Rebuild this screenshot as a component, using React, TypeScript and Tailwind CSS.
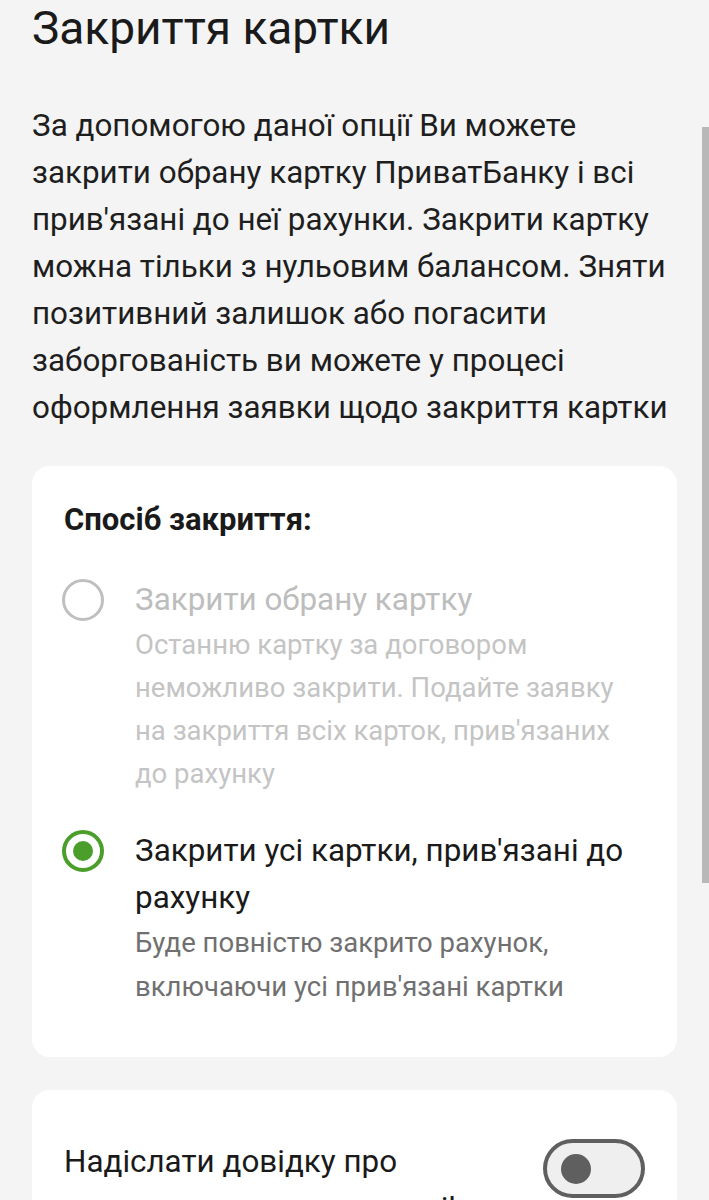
import React from "react";

type Option = {
  title: string;
  note: string;
  disabled?: boolean;
  checked?: boolean;
};

const options: Option[] = [
  {
    title: "Закрити обрану картку",
    note: "Останню картку за договором неможливо закрити. Подайте заявку на закриття всіх карток, прив'язаних до рахунку",
    disabled: true,
  },
  {
    title: "Закрити усі картки, прив'язані до рахунку",
    note: "Буде повністю закрито рахунок, включаючи усі прив'язані картки",
    checked: true,
  },
];

const Radio = ({ checked, disabled }: { checked?: boolean; disabled?: boolean }) => {
  if (checked)
    return (
      <div className="mt-[3px] flex h-[42px] w-[42px] shrink-0 items-center justify-center rounded-full border-[4px] border-[#4c9e2b]">
        <div className="h-[20px] w-[20px] rounded-full bg-[#4c9e2b]"></div>
      </div>
    );
  return (
    <div
      className={`mt-[3px] h-[42px] w-[42px] shrink-0 rounded-full border-[3px] ${
        disabled ? "border-[#bfbfbf]" : "border-[#5f5f5f]"
      }`}
    ></div>
  );
};

export default function App() {
  return (
    <div className="relative min-h-[1200px] overflow-hidden bg-[#f4f4f4] font-['Roboto',sans-serif] text-[#1a1a1a]">
      <div className="px-8 pt-[4px]">
        <h1 className="text-[46px] leading-[48px] font-normal">Закриття картки</h1>
        <p className="mt-[50px] text-[31.4px] leading-[47px] text-[#1e1e1e]">
          За допомогою даної опції Ви можете закрити обрану картку ПриватБанку і всі прив'язані до неї
          рахунки. Закрити картку можна тільки з нульовим балансом. Зняти позитивний залишок або
          погасити заборгованість ви можете у процесі оформлення заявки щодо закриття картки
        </p>

        <div className="mt-[35px] rounded-[18px] bg-white pr-8 pl-[30px] pt-[36px] pb-[48px]">
          <div className="pl-[2px] text-[31px] leading-[36px] font-bold">Спосіб закриття:</div>
          <div className="mt-[38px] flex flex-col gap-[32px]">
            {options.map((o) => (
              <div key={o.title} className="flex items-start gap-[31px]">
                <Radio checked={o.checked} disabled={o.disabled} />
                <div>
                  <div
                    className={`text-[31.4px] leading-[47px] ${
                      o.disabled ? "text-[#bdbdbd]" : "text-[#1a1a1a]"
                    }`}
                  >
                    {o.title}
                  </div>
                  <div
                    className={`text-[27.5px] ${
                      o.disabled ? "leading-[43px] text-[#c4c4c4]" : "leading-[44px] text-[#707070]"
                    }`}
                  >
                    {o.note}
                  </div>
                </div>
              </div>
            ))}
          </div>
        </div>

        <div className="mt-[33px] flex items-start justify-between rounded-[18px] bg-white px-8 pt-[48px] pb-10">
          <div className="w-[430px] text-[31.4px] leading-[47px]">
            Надіслати довідку про закриття рахунку на e-mail
          </div>
          <div className="mt-[1px] flex h-[59px] w-[102px] shrink-0 items-center rounded-full border-[4px] border-[#5f5f5f] bg-[#efefef] pl-[14px]">
            <div className="h-[30px] w-[30px] rounded-full bg-[#5f5f5f]"></div>
          </div>
        </div>
      </div>

      {/* scroll indicator */}
      <div className="absolute top-[127px] right-0 h-[756px] w-[7px] bg-[#b8b8b8]"></div>
    </div>
  );
}
